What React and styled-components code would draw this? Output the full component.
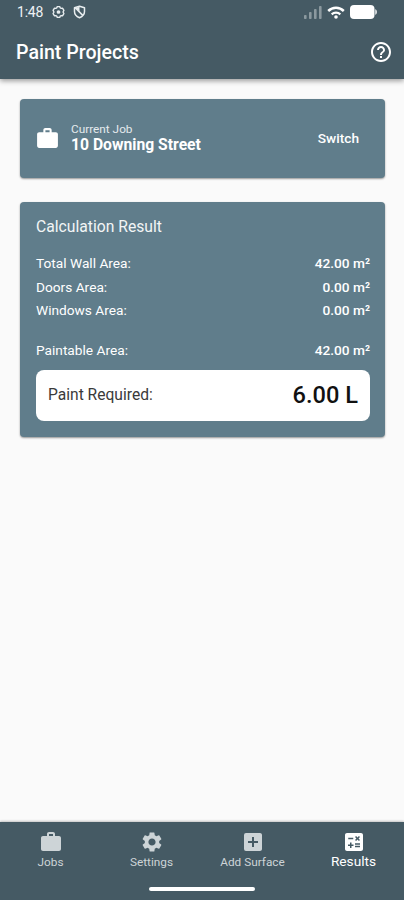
import styled, { createGlobalStyle } from "styled-components";
import {
  MdAddBox,
  MdCalculate,
  MdHelpOutline,
  MdSettings,
  MdWork,
} from "react-icons/md";

const GlobalStyle = createGlobalStyle`
  * {
    box-sizing: border-box;
  }

  body {
    margin: 0;
    background: #fafafa;
    font-family: Roboto, "Liberation Sans", sans-serif;
  }
`;

const Screen = styled.div`
  display: flex;
  flex-direction: column;
  width: 100%;
  height: 100vh;
  overflow: hidden;
  background: #fafafa;
`;

const Header = styled.header`
  height: 79px;
  flex: none;
  background: #455a64;
  color: #fff;
  box-shadow: 0 2px 5px rgba(0, 0, 0, 0.38);
`;

const StatusBar = styled.div`
  display: flex;
  align-items: center;
  justify-content: space-between;
  height: 24px;
  padding: 0 27px 0 17px;
`;

const StatusGroup = styled.div`
  display: flex;
  align-items: center;
  gap: ${(props) => props.$gap};

  svg {
    display: block;
  }
`;

const Clock = styled.span`
  width: 27px;
  font-size: 14px;
  line-height: 24px;
  letter-spacing: -0.2px;
  color: #eef2f4;
  white-space: nowrap;
`;

const TitleBar = styled.div`
  display: flex;
  align-items: center;
  justify-content: space-between;
  height: 55px;
  padding: 0 11px 0 16px;

  svg {
    display: block;
  }
`;

const Title = styled.h1`
  margin: 1px 0 0;
  font-size: 19.6px;
  font-weight: 500;
  white-space: nowrap;
`;

const Content = styled.main`
  flex: 1;
  display: flex;
  flex-direction: column;
  gap: 24px;
  padding: 20px 19px 0 20px;
`;

const Card = styled.section`
  border-radius: 4px;
  background: #607d8b;
  color: #fff;
  box-shadow: 0 1px 2px rgba(0, 0, 0, 0.4);
`;

const JobCard = styled(Card)`
  display: flex;
  align-items: center;
  height: 79px;
  padding: 0 26px 0 15px;

  svg {
    display: block;
    flex: none;
  }
`;

const JobText = styled.div`
  flex: 1;
  margin: -2px 0 0 11px;
  white-space: nowrap;
`;

const JobLabel = styled.div`
  font-size: 11.8px;
  line-height: 14px;
  color: #e4eaed;
`;

const JobName = styled.div`
  font-size: 15.7px;
  line-height: 18px;
  font-weight: 700;
`;

const SwitchButton = styled.button`
  margin-top: -1px;
  padding: 0;
  border: none;
  background: none;
  color: #fff;
  font-family: inherit;
  font-size: 13.7px;
  font-weight: 500;
  cursor: pointer;
`;

const ResultCard = styled(Card)`
  height: 235px;
  padding: 14px 15px 0 16px;
`;

const ResultTitle = styled.h2`
  margin: 0 0 14px;
  font-size: 15.7px;
  line-height: 22px;
  font-weight: 400;
  color: #f2f5f6;
`;

const Row = styled.div`
  display: flex;
  justify-content: space-between;
  margin-top: ${(props) => props.$top || "0"};
  font-size: 13.7px;
  line-height: 23.7px;
  white-space: nowrap;
`;

const RowLabel = styled.span``;

const RowValue = styled.span`
  font-weight: 500;
`;

const Required = styled.div`
  display: flex;
  align-items: center;
  justify-content: space-between;
  height: 51px;
  margin-top: 7px;
  padding: 0 12px;
  border-radius: 8px;
  background: #fff;
  white-space: nowrap;
`;

const RequiredLabel = styled.span`
  font-size: 15.6px;
  color: #3a3a3a;
`;

const RequiredValue = styled.span`
  font-size: 23.6px;
  font-weight: 500;
  color: #111;
`;

const Nav = styled.nav`
  flex: none;
  height: 78px;
  background: #455a64;
  box-shadow: 0 -1px 2px rgba(0, 0, 0, 0.22);
`;

const Tabs = styled.div`
  display: grid;
  grid-template-columns: repeat(4, 1fr);
  height: 63px;
`;

const Tab = styled.div`
  display: flex;
  flex-direction: column;
  align-items: center;
  padding-top: 8px;
  color: ${(props) => (props.$active ? "#fff" : "#cdd4d7")};

  svg {
    display: block;
  }
`;

const TabLabel = styled.span`
  margin-top: ${(props) => (props.$active ? "-1px" : "0")};
  font-size: ${(props) => (props.$active ? "13.7px" : "11.8px")};
  line-height: 17px;
  white-space: nowrap;
`;

const HomeIndicator = styled.div`
  width: 106px;
  height: 4px;
  margin: 2px auto 0;
  border-radius: 2px;
  background: #fff;
`;

const StatusGear = () => (
  <svg width="13" height="14" viewBox="0 0 14 14" fill="none" stroke="#e8edef">
    <path
      d="M5.700 1.200h2.600l.5 1.300 1.200.6 1.500-.1 1.300 2.300-.9 1.700.9 1.700-1.300 2.300-1.500-.1-1.200.6-.5 1.300H5.700l-.5-1.300-1.200-.6-1.500.1-1.300-2.300.9-1.700-.9-1.700L2.500 3l1.500.1 1.200-.6z"
      strokeWidth="1.500"
      strokeLinejoin="round"
    />
    <circle cx="7" cy="7" r="2" fill="#e8edef" stroke="none" />
  </svg>
);

const StatusShield = () => (
  <svg width="13" height="14" viewBox="0 0 13 14" fill="none" stroke="#e8edef">
    <path
      d="M6.500 1.200 11.500 2.800v3.700c0 2.800-2 5-5 6.200-3-1.200-5-3.400-5-6.200V2.800z"
      strokeWidth="1.500"
      strokeLinejoin="round"
    />
    <path d="M2.200 2.800 9.800 10.400" strokeWidth="1.600" />
    <path d="M2.500 3 6.500 1.800v4.800z" fill="#e8edef" stroke="none" />
  </svg>
);

const Signal = () => (
  <svg width="18" height="13" viewBox="0 0 18 13" fill="#8b999f">
    <rect x="0" y="9" width="2.600" height="4" rx=".8" />
    <rect x="5" y="6" width="2.600" height="7" rx=".8" />
    <rect x="10" y="3" width="2.600" height="10" rx=".8" />
    <rect x="15" y="0" width="2.600" height="13" rx=".8" />
  </svg>
);

const Wifi = () => (
  <svg width="18" height="13" viewBox="0 0 18 13" fill="none" stroke="#fff">
    <path d="M1.200 5a11.200 11.200 0 0 1 15.600 0" strokeWidth="2.500" />
    <path d="M4.700 8.400a6.200 6.200 0 0 1 8.600 0" strokeWidth="2.200" />
    <circle cx="9" cy="11" r="1.800" fill="#fff" stroke="none" />
  </svg>
);

const Battery = () => (
  <svg width="27" height="14" viewBox="0 0 27 14" fill="#fff">
    <rect x="0" y="0" width="24.500" height="14" rx="4" />
    <path d="M25.300 4.200c1 .3 1.500 1.300 1.500 2.800s-.5 2.500-1.500 2.800z" />
  </svg>
);

const areas = [
  { label: "Total Wall Area:", value: "42.00 m²" },
  { label: "Doors Area:", value: "0.00 m²" },
  { label: "Windows Area:", value: "0.00 m²" },
  { label: "Paintable Area:", value: "42.00 m²", top: "16px" },
];

const tabs = [
  { label: "Jobs", icon: MdWork },
  { label: "Settings", icon: MdSettings },
  { label: "Add Surface", icon: MdAddBox },
  { label: "Results", icon: MdCalculate, active: true },
];

export default function App() {
  return (
    <>
      <GlobalStyle />
      <Screen>
        <Header>
          <StatusBar>
            <StatusGroup $gap="8px">
              <Clock>1:48</Clock>
              <StatusGear />
              <StatusShield />
            </StatusGroup>
            <StatusGroup $gap="5px">
              <Signal />
              <Wifi />
              <Battery />
            </StatusGroup>
          </StatusBar>
          <TitleBar>
            <Title>Paint Projects</Title>
            <MdHelpOutline size={24} />
          </TitleBar>
        </Header>

        <Content>
          <JobCard>
            <MdWork size={25} />
            <JobText>
              <JobLabel>Current Job</JobLabel>
              <JobName>10 Downing Street</JobName>
            </JobText>
            <SwitchButton>Switch</SwitchButton>
          </JobCard>

          <ResultCard>
            <ResultTitle>Calculation Result</ResultTitle>
            {areas.map((area) => (
              <Row key={area.label} $top={area.top}>
                <RowLabel>{area.label}</RowLabel>
                <RowValue>{area.value}</RowValue>
              </Row>
            ))}
            <Required>
              <RequiredLabel>Paint Required:</RequiredLabel>
              <RequiredValue>6.00 L</RequiredValue>
            </Required>
          </ResultCard>
        </Content>

        <Nav>
          <Tabs>
            {tabs.map(({ label, icon: Icon, active }) => (
              <Tab key={label} $active={active}>
                <Icon size={24} />
                <TabLabel $active={active}>{label}</TabLabel>
              </Tab>
            ))}
          </Tabs>
          <HomeIndicator />
        </Nav>
      </Screen>
    </>
  );
}
